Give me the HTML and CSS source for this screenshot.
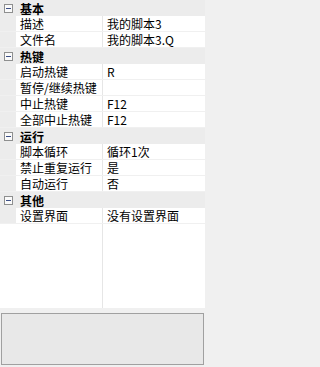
FILE: index.html
```html
<!DOCTYPE html>
<html>
<head>
<meta charset="utf-8">
<link rel="stylesheet" href="styles.css">
</head>
<body>
<div class="panel">
  <div class="grid">
    <div class="cat"><span class="exp"><i></i></span><span class="cat-name">基本</span></div>
    <div class="row"><span class="gut"></span><span class="name">描述</span><span class="val">我的脚本3</span></div>
    <div class="row"><span class="gut"></span><span class="name">文件名</span><span class="val">我的脚本3.Q</span></div>
    <div class="cat"><span class="exp"><i></i></span><span class="cat-name">热键</span></div>
    <div class="row"><span class="gut"></span><span class="name">启动热键</span><span class="val">R</span></div>
    <div class="row"><span class="gut"></span><span class="name">暂停/继续热键</span><span class="val"></span></div>
    <div class="row"><span class="gut"></span><span class="name">中止热键</span><span class="val">F12</span></div>
    <div class="row"><span class="gut"></span><span class="name">全部中止热键</span><span class="val">F12</span></div>
    <div class="cat"><span class="exp"><i></i></span><span class="cat-name">运行</span></div>
    <div class="row"><span class="gut"></span><span class="name">脚本循环</span><span class="val">循环1次</span></div>
    <div class="row"><span class="gut"></span><span class="name">禁止重复运行</span><span class="val">是</span></div>
    <div class="row"><span class="gut"></span><span class="name">自动运行</span><span class="val">否</span></div>
    <div class="cat"><span class="exp"><i></i></span><span class="cat-name">其他</span></div>
    <div class="row"><span class="gut"></span><span class="name">设置界面</span><span class="val">没有设置界面</span></div>
    <div class="filler"><span></span><span class="fill-name"></span><span></span></div>
  </div>
  <div class="desc"></div>
</div>
</body>
</html>
```
FILE: styles.css
```css
html, body {
  margin: 0;
  padding: 0;
  background: #f0f0f0;
}
.panel {
  width: 205px;
  height: 367px;
  display: flex;
  flex-direction: column;
  font-family: "Noto Sans CJK SC", "Liberation Sans", sans-serif;
  font-size: 12px;
  color: #000;
}
.grid {
  height: 308px;
  background: #fff;
  display: flex;
  flex-direction: column;
}
.row, .filler {
  display: grid;
  grid-template-columns: 16px 87px 1fr;
}
.row {
  height: 16px;
  box-sizing: border-box;
  border-bottom: 1px solid #f0f0f0;
}
.gut {
  background: #ececec;
}
.name {
  border-right: 1px solid #e6e6e6;
  padding-left: 4px;
  line-height: 15px;
  white-space: nowrap;
  overflow: hidden;
}
.val {
  padding-left: 4px;
  line-height: 15px;
  white-space: nowrap;
  overflow: hidden;
}
.cat {
  height: 16px;
  box-sizing: border-box;
  background: #ececec;
  display: flex;
  align-items: center;
}
.exp {
  width: 9px;
  height: 9px;
  box-sizing: border-box;
  border: 1px solid #8e8f8f;
  background: #fafafa;
  margin-left: 4px;
  margin-right: 7px;
  display: flex;
  align-items: center;
  justify-content: center;
}
.exp i {
  display: block;
  width: 5px;
  height: 1px;
  background: #3c4f86;
}
.cat-name {
  font-weight: bold;
  line-height: 15px;
}
.filler {
  flex: 1;
}
.fill-name {
  border-right: 1px solid #e6e6e6;
}
.desc {
  margin: 5px 1px 0 1px;
  height: 52px;
  box-sizing: border-box;
  border: 1px solid #a0a0a0;
  background: #e8e8e8;
}
```
